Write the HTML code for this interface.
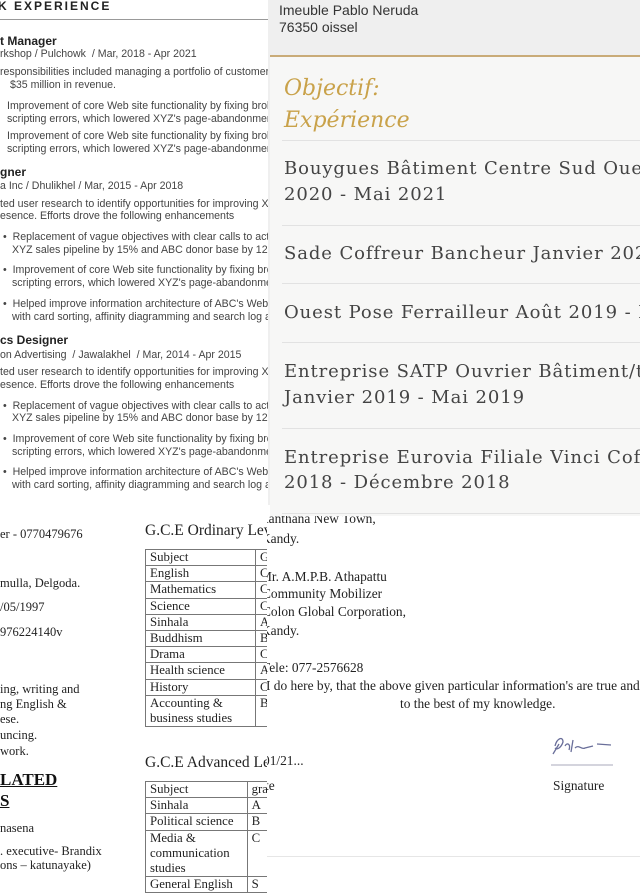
<!DOCTYPE html>
<html><head><meta charset="utf-8"><style>
*{margin:0;padding:0;box-sizing:border-box}
body{width:640px;height:895px;position:relative;overflow:hidden;background:#fff;font-family:"Liberation Sans",sans-serif}
.a{position:absolute;white-space:nowrap;line-height:1}
#tl{position:absolute;left:0;top:0;width:268px;height:505px;background:#fff;overflow:hidden;color:#333}
#tl .a{font-size:10.6px;color:#444}
#tl .b{font-weight:bold;font-size:12px;color:#222}
#strip{position:absolute;left:268px;top:0;width:6px;height:505px;background:#efefef}
#tr{position:absolute;left:270px;top:0;width:370px;height:516px;background:#f7f7f6;overflow:hidden}
#tr .hd{position:absolute;left:0;top:0;width:370px;height:57px;background:#efefef;border-bottom:2px solid #c9ab78}
#tr .s{font-family:"DejaVu Serif",serif;font-size:18px;color:#444;letter-spacing:0.9px}
#tr .ln{position:absolute;left:12px;width:358px;height:1px;background:#e2e2e2}
#tr .g{font-family:"DejaVu Serif",serif;font-style:italic;font-size:22px;color:#c9a24a}
.t{font-family:"Liberation Serif",serif;font-size:12.5px;color:#222}
#rb .t{font-size:13.4px}
table{border-collapse:collapse;font-family:"Liberation Serif",serif;font-size:12.8px;color:#222}
td{border:1px solid #777;padding:0 4px;line-height:15.2px;vertical-align:top}
#rb{position:absolute;left:267px;top:516px;width:373px;height:379px;overflow:hidden;background:#fff}
</style></head><body>
<div id="tl">
<div class="a b" style="left:-2px;top:0;font-size:12px;letter-spacing:2px">K EXPERIENCE</div>
<div style="position:absolute;left:0;top:19px;width:268px;height:1px;background:#999"></div>
<div class="a b" style="left:0;top:35px">t Manager</div>
<div class="a" style="left:0;top:49px">rkshop / Pulchowk &nbsp;/ Mar, 2018 - Apr 2021</div>
<div class="a" style="left:0;top:67px">responsibilities included managing a portfolio of customers</div>
<div class="a" style="left:10px;top:80px">$35 million in revenue.</div>
<div class="a" style="left:7px;top:101px">Improvement of core Web site functionality by fixing broken</div>
<div class="a" style="left:7px;top:114px">scripting errors, which lowered XYZ's page-abandonment</div>
<div class="a" style="left:7px;top:131px">Improvement of core Web site functionality by fixing broken</div>
<div class="a" style="left:7px;top:144px">scripting errors, which lowered XYZ's page-abandonment</div>
<div class="a b" style="left:0;top:166px">gner</div>
<div class="a" style="left:0;top:181px">a Inc / Dhulikhel / Mar, 2015 - Apr 2018</div>
<div class="a" style="left:0;top:199px">ted user research to identify opportunities for improving XYZ</div>
<div class="a" style="left:0;top:211px">esence. Efforts drove the following enhancements</div>
<div class="a" style="left:3px;top:232px">•&nbsp; Replacement of vague objectives with clear calls to action</div>
<div class="a" style="left:12px;top:245px">XYZ sales pipeline by 15% and ABC donor base by 12%</div>
<div class="a" style="left:3px;top:265px">•&nbsp; Improvement of core Web site functionality by fixing broken</div>
<div class="a" style="left:12px;top:278px">scripting errors, which lowered XYZ's page-abandonment</div>
<div class="a" style="left:3px;top:299px">•&nbsp; Helped improve information architecture of ABC's Web site</div>
<div class="a" style="left:12px;top:312px">with card sorting, affinity diagramming and search log analysis</div>
<div class="a b" style="left:0;top:334px">cs Designer</div>
<div class="a" style="left:0;top:350px">on Advertising &nbsp;/ Jawalakhel &nbsp;/ Mar, 2014 - Apr 2015</div>
<div class="a" style="left:0;top:367px">ted user research to identify opportunities for improving XYZ</div>
<div class="a" style="left:0;top:380px">esence. Efforts drove the following enhancements</div>
<div class="a" style="left:3px;top:401px">•&nbsp; Replacement of vague objectives with clear calls to action</div>
<div class="a" style="left:12px;top:413px">XYZ sales pipeline by 15% and ABC donor base by 12%</div>
<div class="a" style="left:3px;top:434px">•&nbsp; Improvement of core Web site functionality by fixing broken</div>
<div class="a" style="left:12px;top:447px">scripting errors, which lowered XYZ's page-abandonment</div>
<div class="a" style="left:3px;top:467px">•&nbsp; Helped improve information architecture of ABC's Web site</div>
<div class="a" style="left:12px;top:480px">with card sorting, affinity diagramming and search log analysis</div>
</div>
<div id="strip"></div>
<div id="tr">
<div class="hd"></div>
<div class="a" style="left:9px;top:3px;font-size:14px;color:#333">Imeuble Pablo Neruda</div>
<div class="a" style="left:9px;top:20px;font-size:14px;color:#333">76350 oissel</div>
<div class="a g" style="left:14px;top:78px">Objectif:</div>
<div class="a g" style="left:14px;top:110px">Expérience</div>
<div class="ln" style="top:140px"></div>
<div class="a s" style="left:14px;top:160px">Bouygues Bâtiment Centre Sud Ouest Juin</div>
<div class="a s" style="left:14px;top:186px">2020 - Mai 2021</div>
<div class="ln" style="top:225px"></div>
<div class="a s" style="left:14px;top:245px">Sade Coffreur Bancheur Janvier 2020 - Mars</div>
<div class="ln" style="top:283px"></div>
<div class="a s" style="left:14px;top:304px">Ouest Pose Ferrailleur Août 2019 - Décembre</div>
<div class="ln" style="top:342px"></div>
<div class="a s" style="left:14px;top:363px">Entreprise SATP Ouvrier Bâtiment/travaux</div>
<div class="a s" style="left:14px;top:389px">Janvier 2019 - Mai 2019</div>
<div class="ln" style="top:428px"></div>
<div class="a s" style="left:14px;top:449px">Entreprise Eurovia Filiale Vinci Coffreur</div>
<div class="a s" style="left:14px;top:474px">2018 - Décembre 2018</div>
<div class="ln" style="top:513px"></div>
</div>
<div class="a t" style="left:0;top:528px">er - 0770479676</div>
<div class="a t" style="left:0;top:577px">mulla, Delgoda.</div>
<div class="a t" style="left:0;top:601px">/05/1997</div>
<div class="a t" style="left:0;top:626px">976224140v</div>
<div class="a t" style="left:0;top:683px">ing, writing and</div>
<div class="a t" style="left:0;top:698px">ng English &amp;</div>
<div class="a t" style="left:0;top:713px">ese.</div>
<div class="a t" style="left:0;top:729px">uncing.</div>
<div class="a t" style="left:0;top:745px"> work.</div>
<div class="a" style="left:0;top:771px;font-family:'Liberation Serif',serif;font-weight:bold;font-size:17px;text-decoration:underline;color:#111">LATED</div>
<div class="a" style="left:0;top:792px;font-family:'Liberation Serif',serif;font-weight:bold;font-size:17px;text-decoration:underline;color:#111">S</div>
<div class="a t" style="left:0;top:822px">nasena</div>
<div class="a t" style="left:0;top:845px">. executive- Brandix</div>
<div class="a t" style="left:0;top:859px">ons – katunayake)</div>
<div class="a" style="left:145px;top:523px;font-family:'Liberation Serif',serif;font-size:15.5px;color:#222">G.C.E Ordinary Level</div>
<table style="position:absolute;left:145px;top:549px;width:140px">
<tr><td style="width:110px">Subject</td><td>G</td></tr>
<tr><td>English</td><td>C</td></tr>
<tr><td>Mathematics</td><td>C</td></tr>
<tr><td>Science</td><td>C</td></tr>
<tr><td>Sinhala</td><td>A</td></tr>
<tr><td>Buddhism</td><td>B</td></tr>
<tr><td>Drama</td><td>C</td></tr>
<tr><td>Health science</td><td>A</td></tr>
<tr><td>History</td><td>C</td></tr>
<tr><td>Accounting &amp;<br>business studies</td><td>B</td></tr>
</table>
<div class="a" style="left:145px;top:755px;font-family:'Liberation Serif',serif;font-size:15.5px;color:#222">G.C.E Advanced Level</div>
<table style="position:absolute;left:145px;top:781px;width:140px">
<tr><td style="width:110px">Subject</td><td>grade</td></tr>
<tr><td>Sinhala</td><td>A</td></tr>
<tr><td>Political science</td><td>B</td></tr>
<tr><td>Media &amp;<br>communication<br>studies</td><td>C</td></tr>
<tr><td>General English</td><td>S</td></tr>
</table>
<div id="rb">
<div class="a t" style="left:-8px;top:-4px">Kanthana New Town,</div>
<div class="a t" style="left:-6px;top:16px">Kandy.</div>
<div class="a t" style="left:-7px;top:54px">Mr. A.M.P.B. Athapattu</div>
<div class="a t" style="left:-5px;top:71px">Community Mobilizer</div>
<div class="a t" style="left:-5px;top:89px">Colon Global Corporation,</div>
<div class="a t" style="left:-6px;top:108px">Kandy.</div>
<div class="a t" style="left:-5px;top:145px">Tele: 077-2576628</div>
<div class="a t" style="left:-1px;top:163px">I do here by, that the above given particular information's are true and</div>
<div class="a t" style="left:133px;top:181px">to the best of my knowledge.</div>
<svg style="position:absolute;left:282px;top:216px" width="70" height="40"><path d="M6 14 C8 6 14 4 14 10 C12 16 8 18 6 16 M10 12 L4 22 M16 14 C18 10 22 12 20 18 M24 8 L22 20 M26 16 C30 12 32 18 36 16 L44 14 M48 12 L62 13" stroke="#6a6f9a" stroke-width="1.3" fill="none"/><line x1="2" y1="33" x2="64" y2="33" stroke="#aab" stroke-width="1"/></svg>
<div class="a t" style="left:-4px;top:238px">01/21...</div>
<div class="a t" style="left:-2px;top:263px">te</div>
<div class="a t" style="left:286px;top:263px">Signature</div>
<div style="position:absolute;left:0;top:340px;width:373px;height:1px;background:#e6e6e6"></div>
</div>
</body></html>
